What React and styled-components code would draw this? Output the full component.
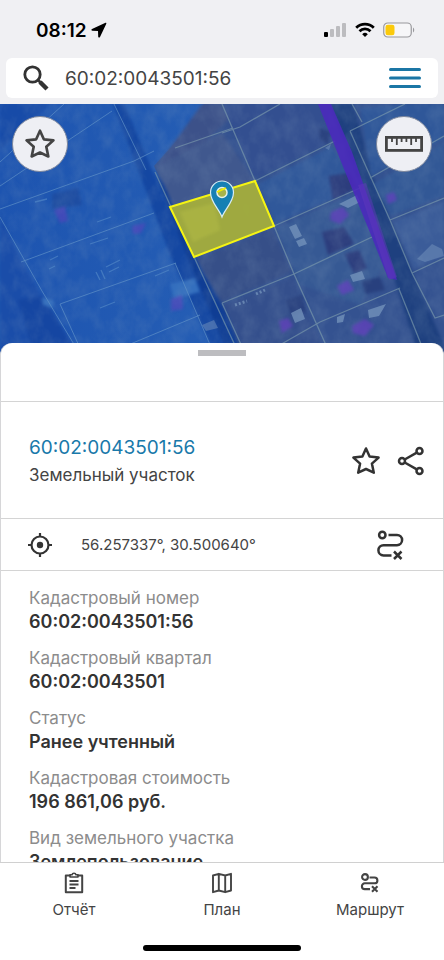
import styled, { createGlobalStyle } from 'styled-components';

const GlobalStyle = createGlobalStyle`
	* {
		box-sizing: border-box;
	}

	body {
		margin: 0;
		background: #f0f0f3;
		color: #333;
		font-family: Inter, 'Liberation Sans', sans-serif;
	}

	button {
		display: flex;
		align-items: center;
		justify-content: center;
		padding: 0;
		border: 0;
		background: none;
		color: inherit;
		font: inherit;
		cursor: pointer;
	}

	svg {
		display: block;
		flex: none;
	}
`;

const details = [
	{ label: 'Кадастровый номер', value: '60:02:0043501:56' },
	{ label: 'Кадастровый квартал', value: '60:02:0043501' },
	{ label: 'Статус', value: 'Ранее учтенный' },
	{ label: 'Кадастровая стоимость', value: '196 861,06 руб.' },
	{ label: 'Вид земельного участка', value: 'Землепользование' },
];

const LocationArrow = () => (
	<svg width="16" height="16" viewBox="0 0 16 16" fill="#000">
		<path d="M14.500 0.800 1 7c-1 .5-.7 1.800.4 1.800l5.600.2.2 5.600c0 1.100 1.300 1.400 1.800.4L15.300 1.700c.2-.6-.2-1.100-.8-.9z" />
	</svg>
);

const SignalIcon = () => (
	<svg width="23" height="16" viewBox="0 0 23 16" fill="#bcbcbf">
		<rect x="0" y="10" width="4" height="5" rx="1" fill="#000" />
		<rect x="6" y="7" width="4" height="8" rx="1" />
		<rect x="12" y="4" width="4" height="11" rx="1" />
		<rect x="18" y="1" width="4" height="14" rx="1" />
	</svg>
);

const WifiIcon = () => (
	<svg width="20" height="16" viewBox="0 0 20 16" fill="none" stroke="#000" strokeWidth="2.800">
		<path d="M1.200 5.700a12.600 12.600 0 0 1 17.600 0" />
		<path d="M4.500 9.200a7.900 7.900 0 0 1 11 0" />
		<path d="M10 15 7.200 12.200a4 4 0 0 1 5.600 0z" fill="#000" stroke="none" />
	</svg>
);

const BatteryIcon = () => (
	<svg width="32" height="16" viewBox="0 0 32 16">
		<rect x=".75" y="1" width="27.500" height="14" rx="4" fill="#f6f6f8" stroke="#98989c" strokeWidth="1.200" />
		<rect x="2.500" y="2.700" width="9" height="10.600" rx="2.300" fill="#fbca0b" />
		<path d="M30 5.500c1.600.7 1.600 4.300 0 5z" fill="#98989c" />
	</svg>
);

const SearchIcon = () => (
	<svg width="26" height="26" viewBox="0 0 26 26" fill="none" stroke="#333">
		<circle cx="9.500" cy="9.500" r="7.700" strokeWidth="2.800" />
		<path d="m15 15 2.500 2.500" strokeWidth="2.800" />
		<path d="m17 17 7 7" strokeWidth="4.400" />
	</svg>
);

const MenuIcon = () => (
	<svg width="32" height="22" viewBox="0 0 32 22" fill="none" stroke="#1b76a5" strokeWidth="3" strokeLinecap="round">
		<path d="M1.500 2.500h29M1.500 11h29M1.500 19.500h29" />
	</svg>
);

const StarIcon = ({ size }) => (
	<svg width={size} height={size} viewBox="0 0 30 30" fill="none" stroke="currentColor" strokeWidth="2.500" strokeLinejoin="round">
		<path d="m15 2.500 3.600 8.100 9 1-6.700 6 1.900 9.100-7.800-3.700-7.800 3.700 1.900-9.100-6.700-6 9-1z" />
	</svg>
);

const RulerIcon = () => (
	<svg width="38" height="16" viewBox="0 0 38 16" fill="none" stroke="#444" strokeWidth="2.800">
		<rect x="1.400" y="1.400" width="35.200" height="13" />
		<path d="M7 2v4M11.800 2v7M16.600 2v4M21.400 2v4M26.200 2v7M31 2v4" strokeWidth="1.800" />
	</svg>
);

const ShareIcon = () => (
	<svg width="28" height="30" viewBox="0 0 28 30" fill="none" stroke="currentColor" strokeWidth="2.500">
		<circle cx="22.500" cy="5" r="3" />
		<circle cx="5" cy="15" r="3" />
		<circle cx="22.500" cy="25" r="3" />
		<path d="M7.700 13.500 19.800 6.600M7.700 16.500 19.800 23.400" />
	</svg>
);

const TargetIcon = () => (
	<svg width="24" height="24" viewBox="0 0 24 24" fill="none" stroke="currentColor" strokeWidth="2.200">
		<circle cx="12" cy="12" r="8.500" />
		<circle cx="12" cy="12" r="3.200" fill="currentColor" stroke="none" />
		<path d="M12 0v4M12 20v4M0 12h4M20 12h4" />
	</svg>
);

const RouteIcon = () => (
	<svg width="28" height="30" viewBox="0 0 28 30" fill="none" stroke="currentColor" strokeWidth="2.500">
		<circle cx="6.300" cy="5" r="3.200" />
		<path d="M12.500 5h8.500a5.100 5.100 0 0 1 0 10.200H7.500a5.100 5.100 0 0 0 0 10.200h8" />
		<path d="m18 21.500 7.500 7.500M25.500 21.500 18 29" />
	</svg>
);

const RouteSmallIcon = () => (
	<svg width="20" height="22" viewBox="0 0 20 22" fill="none" stroke="currentColor" strokeWidth="2.100">
		<circle cx="5" cy="5" r="2.900" />
		<path d="M9.500 5.500h5a2.900 2.900 0 0 1 0 5.800H4.800a2.900 2.900 0 0 0 0 5.800H10" />
		<path d="m12 14.200 5.500 5.500M17.500 14.200 12 19.700" />
	</svg>
);

const ReportIcon = () => (
	<svg width="20" height="22" viewBox="0 0 20 22" fill="none" stroke="currentColor" strokeWidth="2" strokeLinejoin="round">
		<path d="M6.500 3.500H1.800v16.700h16.400V3.500h-4.700" />
		<path d="M6 5V2.800h2c.4-2 3.600-2 4 0h2V5z" strokeWidth="1.600" />
		<path d="M5.500 9h9M5.500 12.500h9M5.500 16h6" strokeWidth="1.800" />
	</svg>
);

const PlanIcon = () => (
	<svg width="20" height="22" viewBox="0 0 20 22" fill="none" stroke="currentColor" strokeWidth="1.900" strokeLinejoin="round">
		<path d="M1 3.500 6.800 1.800l6.400 1.700L19 1.800v16.700l-5.800 1.700-6.400-1.700L1 20.200zM6.800 1.800v16.700M13.200 3.500v16.700" />
	</svg>
);

const MapSvg = styled.svg`
	width: 100%;
	height: 100%;
`;

const MapPicture = () => (
	<MapSvg viewBox="0 104 444 250" preserveAspectRatio="xMidYMin slice" aria-hidden="true">
		<defs>
			<filter id="soft" x="-20%" y="-20%" width="140%" height="140%" colorInterpolationFilters="sRGB">
				<feGaussianBlur stdDeviation="1.500" />
			</filter>
			<filter id="ground" x="0" y="0" width="100%" height="100%" colorInterpolationFilters="sRGB">
				<feTurbulence type="fractalNoise" baseFrequency=".07 .05" numOctaves="4" seed="7" />
				<feColorMatrix values="0 0 0 0 .55  0 0 0 0 .65  0 0 0 0 .75  2 0 0 0 -.7" />
			</filter>
			<linearGradient id="fields" x1="0" x2="1">
				<stop offset="0" stopColor="#1d54b0" />
				<stop offset="1" stopColor="#265fb5" />
			</linearGradient>
		</defs>
		<rect y="104" width="444" height="250" fill="#345290" />
		<path d="M0 104h204l-14 22-36 40 86 188H0z" fill="url(#fields)" />
		<g filter="url(#soft)">
			<path d="M0 104h50L0 150z" fill="#174ba8" />
			<path d="M0 215l20 44 22 38 38 57H0z" fill="#1a4da9" />
			<path d="M18 300l26-4 32 58H34z" fill="#1443a0" opacity=".7" />
			<path d="M202 104h42l-45 44-42 18z" fill="#3c5189" />
			<path d="M157 166l65-33 33 48-85 26z" fill="#40588e" />
			<path d="M222 104h96l16 36-80 38z" fill="#334f90" />
			<path d="M258 184l74-38 27 42-84 36z" fill="#30589a" />
			<path d="M276 228l84-37 30 64-30 50-60-20z" fill="#365994" />
			<path d="M196 260l76-31 20 43-70 30z" fill="#364f88" />
			<path d="M223 306l70-29 30 70h-80z" fill="#344f8c" />
			<path d="M113 104h11l45 106 30 54 42 90h-26l-44-97z" fill="#1447a2" />
			<path d="M154 170l10 14 32 76 30 52 16 42h-14l-38-90z" fill="#0f3d94" />
			<path d="M330 104h23l20 72 17 44 24 56 34 78h-30l-24-76z" fill="#1e407f" />
			<path d="M329 176l20-3 10 14-26 13zM322 232l22-5 10 17-26 11zM345 254l14-4 8 18-13 6z" fill="#2c3d7d" />
			<path d="M52 194l26-6 4 17-30 4z" fill="#1e4da2" />
			<path d="M286 300l16-5 4 17-15 3zM362 281l18-4 5 13-20 4zM319 128l11 4-2 13-8-6z" fill="#28407e" />
			<path d="M360 108l45-4h39v35l-73 37z" fill="#2f5799" />
			<path d="M373 184l71-42v54l-53 20z" fill="#325896" />
			<path d="M393 222l51-20v54l-30 13z" fill="#3b5c99" />
			<path d="M170 284l25-6 5 14-26 7zM42 297l12 4-1 7-10-3z" fill="#346fbe" />
		</g>
		<rect y="104" width="444" height="250" filter="url(#ground)" opacity=".16" />
		<g fill="none" stroke="#7f9eae" strokeWidth="1.300" opacity=".62">
			<path d="M222 104l33 77 19 45 20 48 36 80M222 133l18-6 40-23M255 181l80-40M274 226l86-38M222 303l72-29 78-37M278 346l42-24 80-34M222 303l22 48M399 289l24 60" />
			<path d="M350 131l55-27M350 131l40 89 22 53 23 45 9-3M370 178l74-42M390 220l54-22M412 273l32-15M352 104l10 18M175 148l58-20M155 172l16 35M194 257l45 97" />
		</g>
		<g fill="none" stroke="#6393c7" strokeWidth="1" opacity=".65">
			<path d="M0 186l112-75M0 162l64-58M0 209l134-48 20-10M21 262l133-49M60 304l116-41M0 217l42 74 36 60M60 304l20 44M116 350l84-35M114 104l32 66M175 263l36 84" />
		</g>
		<g fill="none" stroke="#4d83c4" strokeWidth="1.300" opacity=".75">
			<path d="M97 222l14-5M90 244l18-6M100 308l15-6M155 276l14-6M35 202l12-3M50 260l8-4M96 272l4 8M101 270l4 9M106 267l14-7M109 272l10-5M49 269l6-3" />
		</g>
		<g fill="#7695bd" opacity=".75">
			<path d="M289 227l7-3 6 12-7 3zM296 241l8-3 3 6-8 3zM339 204l18-9 3 7-12 6zM350 275l12-4 3 8-12 3zM291 313l10-5 4 11-10 4zM368 310l18-6-7 12-10 2zM337 317l8-3-2 8-6 1z" />
			<path d="M417 259l15-15 10 5 2 7-19 6zM325 148l6-4-2 6zM202 325l12-5 4 8-12 3z" opacity=".65" />
			<path d="M235 305l12-4M256 294l9-4" stroke="#7695bd" strokeWidth="3" strokeDasharray="2 2" />
		</g>
		<g fill="#673ec1" filter="url(#soft)" opacity=".68">
			<path d="M331 212l12-5 6 8-9 9-10-4zM337 286l11-6 6 10-12 5zM352 326l13-7 9 6-9 11-12-3zM279 321l9-3 5 8-11 7zM386 195l8-3 3 8-9 4z" />
			<path d="M54 210l11-4 3 15-8 2zM132 226l14-3-5 10-8 1zM171 299l11-4 1 14-12 2z" opacity=".7" />
		</g>
		<path d="M318 104h13l21 48 24 68 21 60-9-2-17-43-27-66z" fill="#4b29bd" opacity=".88" />
		<path d="M358 185l8-2 31 94-8 3z" fill="#6037bb" opacity=".5" />
		<path d="M170 207l85-26 19 45-80 31z" fill="#a3ad3c" fillOpacity=".96" stroke="#f5f413" strokeWidth="2" />
		<path d="M180 212l34-9 6 27-27 12z" fill="#b9c048" opacity=".4" filter="url(#soft)" />
		<path d="M222 217c-3-8-11.500-15-11.500-24.500a11.500 11.500 0 0 1 23 0C233.500 202 225 209 222 217z" fill="#1580b4" stroke="#d9edf4" strokeWidth="1.200" />
		<circle cx="222" cy="192.500" r="5" fill="#a8b34b" stroke="#e8f3e9" strokeWidth="1.500" />
		<path d="M217 192l9-4" stroke="#f2f000" strokeWidth="1.700" />
	</MapSvg>
);

const Page = styled.div`
	display: flex;
	flex-direction: column;
	height: 100vh;
	min-height: 640px;
`;

const StatusBar = styled.div`
	display: flex;
	align-items: center;
	justify-content: space-between;
	height: 58px;
	padding: 2px 29px 0 36px;
`;

const StatusGroup = styled.div`
	display: flex;
	align-items: center;
	gap: ${({ $gap }) => $gap}px;
	color: #000;
	font-size: 19px;
	font-weight: 600;
`;

const SearchBar = styled.form`
	display: flex;
	flex: none;
	align-items: center;
	height: 40px;
	margin: 0 6px 6px;
	padding: 0 17px;
	border-radius: 6px;
	background: #fff;
`;

const SearchInput = styled.input`
	flex: 1;
	min-width: 0;
	margin: 0 16px;
	padding: 2px 0 0;
	border: 0;
	outline: 0;
	background: none;
	color: #444;
	font: 400 19px/24px Inter, 'Liberation Sans', sans-serif;
`;

const MapArea = styled.div`
	position: relative;
	flex: none;
	height: 250px;
	background: #345290;
`;

const MapButton = styled.button`
	position: absolute;
	top: 12px;
	${({ $side }) => $side}: 12px;
	width: 56px;
	height: 56px;
	border: 1px solid #7d879d;
	border-radius: 50%;
	background: #eeeff4;
	color: #444;
`;

const Sheet = styled.main`
	position: relative;
	display: flex;
	flex: 1;
	flex-direction: column;
	min-height: 0;
	margin-top: -11px;
	border: 1px solid #d6d6d8;
	border-width: 0 1px;
	border-radius: 12px 12px 0 0;
	background: #fff;
`;

const SheetTop = styled.div`
	flex: none;
	height: 59px;
	padding-top: 7px;
	border-bottom: 1px solid #d4d4d4;
`;

const Handle = styled.div`
	width: 48px;
	height: 6px;
	margin: 0 auto;
	background: #bdbdc0;
`;

const Summary = styled.section`
	display: flex;
	flex: none;
	align-items: center;
	justify-content: space-between;
	height: 117px;
	padding: 2px 18px 0 28px;
	border-bottom: 1px solid #d4d4d4;
`;

const Title = styled.h1`
	margin: 0;
	color: #1979aa;
	font-size: 19px;
	font-weight: 400;
	line-height: 28px;
`;

const Subtitle = styled.p`
	margin: 0;
	color: #444;
	font-size: 17px;
	line-height: 26px;
`;

const Actions = styled.div`
	display: flex;
	align-items: center;
	gap: 16px;
`;

const Coordinates = styled.section`
	display: flex;
	flex: none;
	align-items: center;
	height: 52px;
	padding: 0 39px 0 27px;
	border-bottom: 1px solid #d4d4d4;
	color: #333;
	font-size: 15px;

	& span {
		flex: 1;
		margin-left: 29px;
		color: #444;
	}
`;

const DetailList = styled.dl`
	flex: 1;
	min-height: 0;
	margin: 0;
	padding: 15px 28px;
	overflow: hidden;
	font-size: 17px;
	line-height: 24px;
`;

const Detail = styled.div`
	margin-bottom: 12px;

	& dt {
		color: #8c8c8c;
	}

	& dd {
		margin: 0;
		font-size: 18px;
		font-weight: 600;
	}
`;

const BottomBar = styled.footer`
	flex: none;
	height: 98px;
	border-top: 1px solid #d0d0d0;
	background: #fff;
`;

const Tabs = styled.nav`
	display: flex;
	height: 82px;
	padding-top: 9px;
`;

const Tab = styled.button`
	flex: 1;
	flex-direction: column;
	justify-content: flex-start;
	gap: 6px;
	color: #444;
	font-size: 15px;
	line-height: 20px;
`;

const HomeIndicator = styled.div`
	width: 158px;
	height: 6px;
	margin: 0 auto;
	border-radius: 3px;
	background: #000;
`;

const App = () => (
	<>
		<GlobalStyle />
		<Page>
			<StatusBar>
				<StatusGroup $gap={4}>
					<span>08:12</span>
					<LocationArrow />
				</StatusGroup>
				<StatusGroup $gap={8}>
					<SignalIcon />
					<WifiIcon />
					<BatteryIcon />
				</StatusGroup>
			</StatusBar>
			<SearchBar onSubmit={(event) => event.preventDefault()}>
				<SearchIcon />
				<SearchInput type="text" aria-label="Поиск" defaultValue="60:02:0043501:56" />
				<button type="button" aria-label="Меню">
					<MenuIcon />
				</button>
			</SearchBar>
			<MapArea>
				<MapPicture />
				<MapButton type="button" $side="left" aria-label="Избранное">
					<StarIcon size={32} />
				</MapButton>
				<MapButton type="button" $side="right" aria-label="Линейка">
					<RulerIcon />
				</MapButton>
			</MapArea>
			<Sheet>
				<SheetTop>
					<Handle />
				</SheetTop>
				<Summary>
					<div>
						<Title>60:02:0043501:56</Title>
						<Subtitle>Земельный участок</Subtitle>
					</div>
					<Actions>
						<button type="button" aria-label="В избранное">
							<StarIcon size={30} />
						</button>
						<button type="button" aria-label="Поделиться">
							<ShareIcon />
						</button>
					</Actions>
				</Summary>
				<Coordinates>
					<TargetIcon />
					<span>56.257337°, 30.500640°</span>
					<button type="button" aria-label="Проложить маршрут">
						<RouteIcon />
					</button>
				</Coordinates>
				<DetailList>
					{details.map(({ label, value }) => (
						<Detail key={label}>
							<dt>{label}</dt>
							<dd>{value}</dd>
						</Detail>
					))}
				</DetailList>
			</Sheet>
			<BottomBar>
				<Tabs>
					<Tab type="button">
						<ReportIcon />
						Отчёт
					</Tab>
					<Tab type="button">
						<PlanIcon />
						План
					</Tab>
					<Tab type="button">
						<RouteSmallIcon />
						Маршрут
					</Tab>
				</Tabs>
				<HomeIndicator />
			</BottomBar>
		</Page>
	</>
);

export default App;
